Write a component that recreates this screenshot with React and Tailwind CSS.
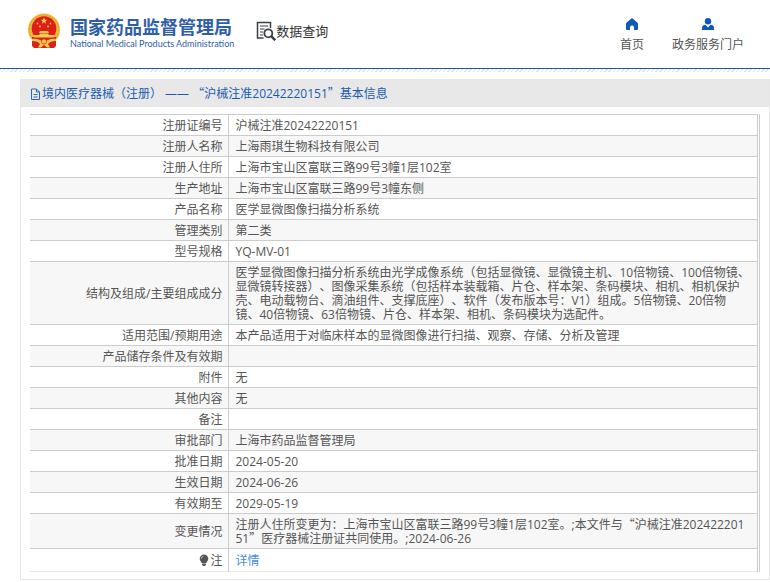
const ROWS = [
  { label: '注册证编号', value: '沪械注准20242220151' },
  { label: '注册人名称', value: '上海雨琪生物科技有限公司' },
  { label: '注册人住所', value: '上海市宝山区富联三路99号3幢1层102室' },
  { label: '生产地址', value: '上海市宝山区富联三路99号3幢东侧' },
  { label: '产品名称', value: '医学显微图像扫描分析系统' },
  { label: '管理类别', value: '第二类' },
  { label: '型号规格', value: 'YQ-MV-01' },
  {
    label: '结构及组成/主要组成成分',
    value: '医学显微图像扫描分析系统由光学成像系统（包括显微镜、显微镜主机、10倍物镜、100倍物镜、显微镜转接器）、图像采集系统（包括样本装载箱、片仓、样本架、条码模块、相机、相机保护壳、电动载物台、滴油组件、支撑底座）、软件（发布版本号：V1）组成。5倍物镜、20倍物\n镜、40倍物镜、63倍物镜、片仓、样本架、相机、条码模块为选配件。',
  },
  { label: '适用范围/预期用途', value: '本产品适用于对临床样本的显微图像进行扫描、观察、存储、分析及管理' },
  { label: '产品储存条件及有效期', value: '' },
  { label: '附件', value: '无' },
  { label: '其他内容', value: '无' },
  { label: '备注', value: '' },
  { label: '审批部门', value: '上海市药品监督管理局' },
  { label: '批准日期', value: '2024-05-20' },
  { label: '生效日期', value: '2024-06-26' },
  { label: '有效期至', value: '2029-05-19' },
  {
    label: '变更情况',
    value: '注册人住所变更为：上海市宝山区富联三路99号3幢1层102室。;本文件与“沪械注准20242220151”医疗器械注册证共同使用。;2024-06-26',
  },
]

// Curly quotes take the full-width CJK glyphs
function Text({ children }) {
  return children.split(/([“”])/).map((part, i) => {
    if (i % 2 === 0) return part
    return <span key={i} className="leading-none font-['Noto_Sans_CJK_SC',sans-serif]">{part}</span>
  })
}

function Emblem() {
  return (
    <svg viewBox="0 0 34 36" className="w-[34px] h-9 shrink-0" aria-hidden="true">
      <circle cx="17" cy="16.500" r="16" fill="#f0b93a" />
      <circle cx="17" cy="16.500" r="14.600" fill="none" stroke="#e09a28" strokeWidth="1" strokeDasharray="2 1.500" />
      <circle cx="17" cy="15.500" r="12.300" fill="#dc1f1a" />
      <path d="M5 24h24v9l-2 2H7l-2-2z" fill="#d8231c" />
      <path d="M17 4.500l.9 2.300h2.400l-1.900 1.500.7 2.400-2.100-1.400-2.100 1.400.7-2.400-1.900-1.500h2.400z" fill="#fbd84b" />
      <g fill="#fbc94b">
        <circle cx="10.500" cy="10.500" r=".9" />
        <circle cx="13" cy="13.500" r=".9" />
        <circle cx="21" cy="13.500" r=".9" />
        <circle cx="23.500" cy="10.500" r=".9" />
        <path d="M13 18h8l1 2h-10zM12.500 20.500h9v1.500h-9zM7 22h20v2.500H7z" />
        <path d="M5 26c4-1 8 .5 12 3 4-2.500 8-4 12-3v2c-4 0-6.500 1-8 3l2 3.500h-3L17 32l-3 2.500h-3l2-3.500c-1.500-2-4-3-8-3z" />
      </g>
      <circle cx="17" cy="28.500" r="2.600" fill="#f7c544" stroke="#d8231c" strokeWidth=".7" />
    </svg>
  )
}

function SearchDocIcon() {
  return (
    <svg viewBox="0 0 20 20" className="size-5 shrink-0" fill="none" stroke="#3c4046" aria-hidden="true">
      <path d="M7.500 17H1.500V1.500h13v5.500" strokeWidth="1.500" />
      <path d="M4 5h8M4 8h4.500M4 11h3M4 14h3" strokeWidth="1.200" />
      <circle cx="12.300" cy="12.300" r="4" strokeWidth="1.800" />
      <path d="M15.200 15.200l4 4" strokeWidth="2.500" />
    </svg>
  )
}

function HomeIcon() {
  return (
    <svg viewBox="0 0 14 12" className="w-3.5 h-3" fill="#0d5bb5" aria-hidden="true">
      <path d="M7 0l5.300 4.500q.7.600.7 1.500v5q0 1-1 1H9V9.200Q9 7.500 7 7.500T5 9.200V12H2q-1 0-1-1V6q0-.9.700-1.500z" />
    </svg>
  )
}

function UserIcon() {
  return (
    <svg viewBox="0 0 14 12" className="w-3.5 h-3" fill="#0d5bb5" aria-hidden="true">
      <circle cx="7" cy="3.200" r="3.200" />
      <path d="M1 12v-2.200C1 7.800 2.500 7 4.500 6.800L7 9.500l2.500-2.700c2 .2 3.500 1 3.500 3V12z" />
    </svg>
  )
}

function FileIcon() {
  return (
    <svg viewBox="0 0 11 12" className="w-[11px] h-3 shrink-0" fill="none" stroke="#2a66b8" aria-hidden="true">
      <path d="M1.500 1h5l3 3v7.500h-8zM6.500 1v3h3M3.500 6.500h4M3.500 9h4" />
    </svg>
  )
}

function BulbIcon() {
  return (
    <svg viewBox="0 0 10 12" className="inline-block w-2.5 h-3 mr-px align-[-1px]" aria-hidden="true">
      <path d="M5 0.500a4.300 4.300 0 0 1 4.300 4.300c0 2-1.500 2.900-2 4.200H2.700C2.200 7.700.7 6.800.7 4.800A4.300 4.300 0 0 1 5 .5zM3 9.500h4v1L6 12H4l-1-1.500z" fill="#555" />
      <path d="M2.300 4.500Q2.500 2.500 4.300 2.200" fill="none" stroke="#ddd" strokeWidth=".7" />
    </svg>
  )
}

function Row({ label, children }) {
  return (
    <tr className="border-t border-[#ccc] even:bg-[#f7f7f7]">
      <th className="w-[198px] pt-1 pb-0.5 px-[5px] text-right font-normal border-r border-[#ccc]">{label}</th>
      <td className="pt-1 pb-0.5 pl-[7px] pr-1.5 break-all whitespace-pre-line border-r border-[#ccc]">{children}</td>
    </tr>
  )
}

export default function App() {
  return (
    <div lang="zh-CN" className="min-h-screen bg-white text-xs leading-[14px] text-[#555] [text-spacing-trim:space-all] font-['Open_Sans','Noto_Sans_CJK_SC',sans-serif]">
      <header className="flex items-center justify-between h-[69px] pl-[27px] pr-[26px] pb-1.5 border-b border-[#205a9c]">
        <div className="flex items-center">
          <Emblem />
          <div className="ml-[9px] pt-1 text-[#2f5ea9]">
            <h1 className="text-lg leading-5 font-bold">国家药品监督管理局</h1>
            <p className="text-[9px] leading-3 mt-px font-['Lato',sans-serif]">National Medical Products Administration</p>
          </div>
          <div className="flex items-center ml-[22px] text-[13px] text-[#333]">
            <SearchDocIcon />
            <span>数据查询</span>
          </div>
        </div>
        <nav className="flex gap-7 pt-2 text-[#555]">
          <a href="#home" className="flex flex-col items-center gap-2">
            <HomeIcon />
            首页
          </a>
          <a href="#portal" className="flex flex-col items-center gap-2">
            <UserIcon />
            政务服务门户
          </a>
        </nav>
      </header>
      <div className="h-[3px] bg-[repeating-linear-gradient(135deg,#d5e6f0_0_1px,#fff_1px_3px)]" />

      <main className="mt-[7px] ml-5 border border-t-0 border-[#e6e6e6]">
        <h2 className="flex items-center gap-px h-7 pt-0.5 pl-[9px] bg-[#e8e8e8] text-[#1a5bb0]">
          <FileIcon />
          <span><Text>境内医疗器械（注册） —— “沪械注准20242220151”基本信息</Text></span>
        </h2>
        <div className="mt-[7px] mb-[7px] mx-[9px] pr-px border-r border-[#ccc]">
          <table className="w-full border-collapse border-b border-[#e8e8e8]">
            <tbody>
              {ROWS.map(r => (
                <Row key={r.label} label={r.label}><Text>{r.value}</Text></Row>
              ))}
              <Row label={<><BulbIcon />注</>}>
                <a href="#detail" className="block py-px text-[#3f8fe0]">详情</a>
              </Row>
            </tbody>
          </table>
        </div>
      </main>
    </div>
  )
}
